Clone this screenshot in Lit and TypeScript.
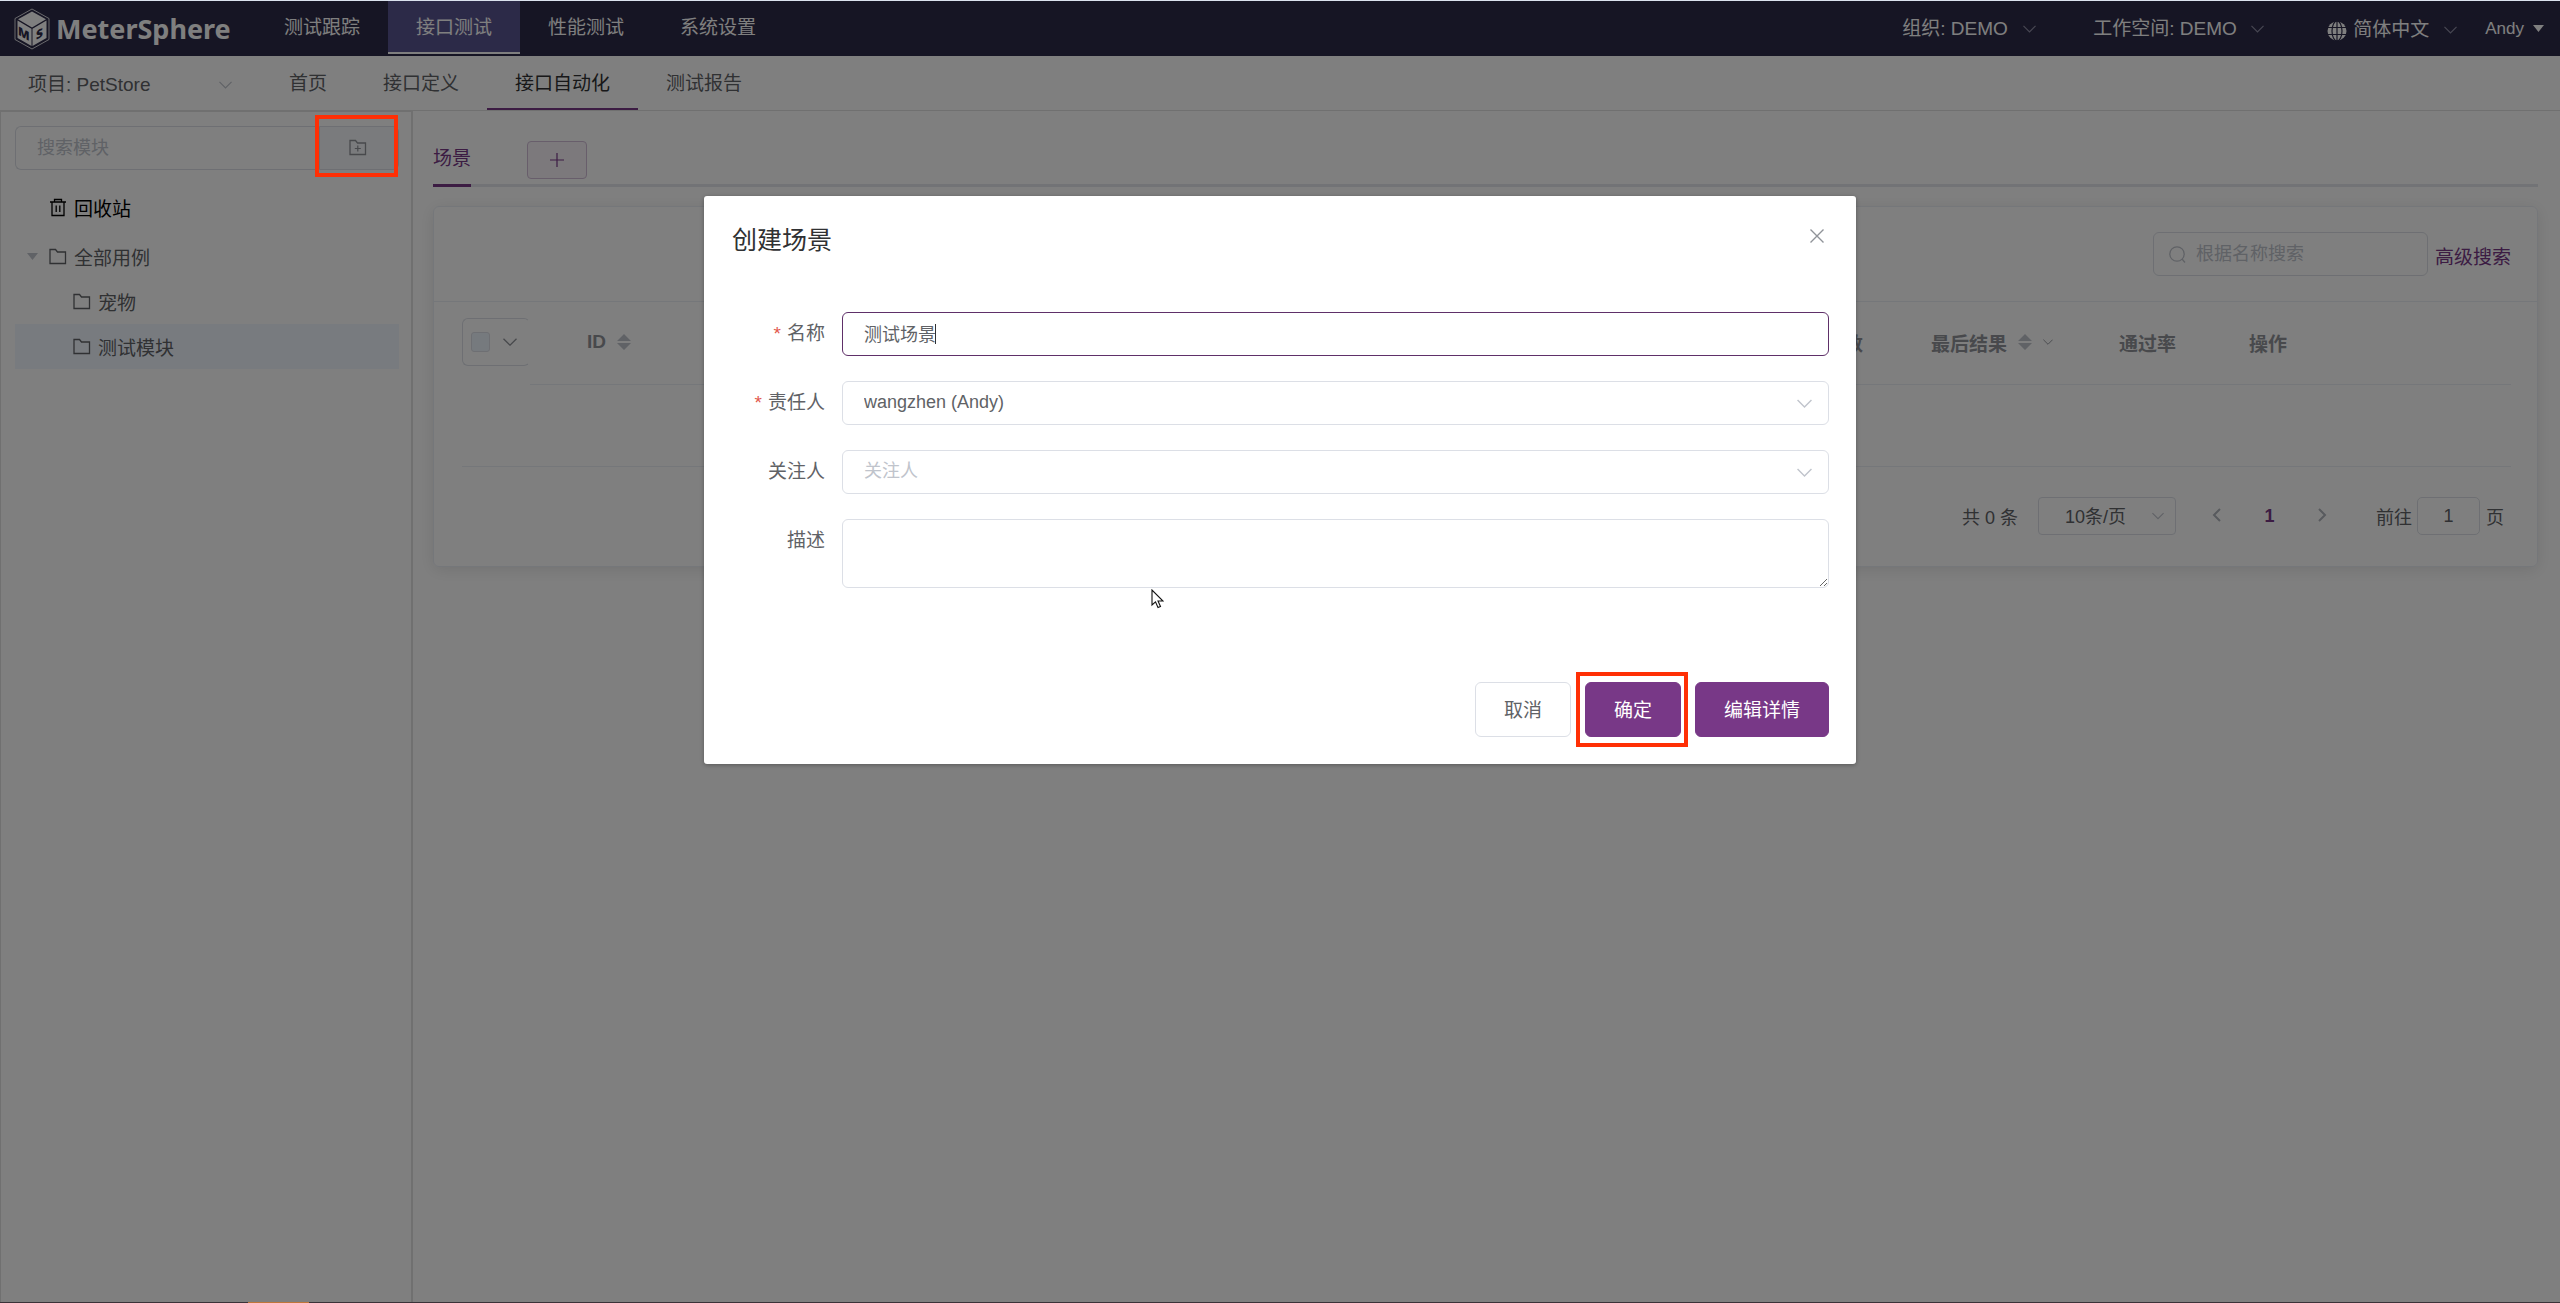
import { LitElement, html, css, svg, nothing } from "lit";
import { customElement, property } from "lit/decorators.js";
import { classMap } from "lit/directives/class-map.js";

const chevron = (cls: string) => html`
  <svg class="chev ${cls}" viewBox="0 0 14 8" aria-hidden="true">
    <path d="M0.5 0.7 7 7.2 13.5 0.7" fill="none" stroke="currentColor" stroke-width="1.3" />
  </svg>
`;

const folderPath = svg`<path d="M1 1.5H6.5L8.5 4H16.5V15.5H1Z" fill="none" stroke="currentColor" stroke-width="1.3" />`;

const folder = html`
  <svg class="folder" viewBox="0 0 18 17" aria-hidden="true">${folderPath}</svg>
`;

const sortIcon = html`
  <svg class="sort" viewBox="0 0 14 16" aria-hidden="true">
    <path d="M7 0 14 7H0ZM0 9H14L7 16Z" fill="#c0c4cc" />
  </svg>
`;

@customElement("ms-select")
export class MsSelect extends LitElement {
  @property() value = "";
  @property() label = "";
  @property() variant = "plain";

  static styles = css`
    :host {
      display: block;
    }
    .wrap {
      display: grid;
      align-items: center;
      height: 100%;
    }
    .field,
    .chev {
      grid-area: 1 / 1;
    }
    .field {
      appearance: none;
      box-sizing: border-box;
      width: 100%;
      height: 100%;
      margin: 0;
      padding: 0 16px 0 0;
      border: 0;
      outline: 0;
      background: none;
      color: inherit;
      font: inherit;
    }
    .field.page {
      padding: 2px 24px 0 26px;
      border: 1px solid #dcdfe6;
      border-radius: 4px;
    }
    .chev {
      justify-self: end;
      width: 13px;
      height: 8px;
      color: #c0c4cc;
      pointer-events: none;
    }
    .chev.dark {
      color: #8e8da4;
    }
    .chev.page {
      width: 12px;
      margin-right: 12px;
    }
  `;

  render() {
    return html`
      <div class="wrap">
        <select class="field ${this.variant}" aria-label=${this.label}>
          <option>${this.value}</option>
        </select>
        ${chevron(this.variant)}
      </div>
    `;
  }
}

@customElement("ms-header")
export class MsHeader extends LitElement {
  static styles = css`
    :host {
      display: block;
    }
    .bar {
      display: flex;
      height: 55px;
      background: #2c2a48;
      color: #fff;
      font-size: 19px;
    }
    .brand {
      display: flex;
      align-items: center;
      gap: 6px;
      box-sizing: border-box;
      width: 256px;
      padding-left: 14px;
      color: #fff;
      text-decoration: none;
    }
    .cube {
      width: 36px;
      height: 42px;
    }
    .mark {
      font: 800 12px "Open Sans", sans-serif;
    }
    .name {
      font: 700 27px/40px "Noto Sans", sans-serif;
    }
    .menu {
      display: flex;
      flex: 1;
      align-items: flex-start;
    }
    .item {
      height: 51px;
      padding: 0 28px;
      border-bottom: 2px solid transparent;
      color: #fff;
      line-height: 53px;
      text-decoration: none;
    }
    .item.active {
      border-bottom-color: #fff;
      background: #595591;
    }
    .tools {
      display: flex;
      align-items: center;
      padding-right: 16px;
    }
    .org {
      width: 134px;
      margin-right: 57px;
    }
    .space {
      width: 171px;
      margin-right: 63px;
    }
    .globe {
      width: 20px;
      height: 20px;
      margin: 5px 6px 0 0;
    }
    .lang {
      width: 104px;
      margin: 2px 28px 0 0;
    }
    .user {
      display: flex;
      align-items: center;
      gap: 9px;
      padding: 0;
      border: 0;
      background: none;
      color: #fff;
      font: 17px/24px "Liberation Sans", sans-serif;
    }
    .caret {
      width: 11px;
      height: 7px;
    }
  `;

  render() {
    const items = ["测试跟踪", "接口测试", "性能测试", "系统设置"];
    return html`
      <header class="bar">
        <a class="brand" href="#">
          <svg class="cube" viewBox="0 0 36 42" aria-hidden="true">
            <path d="M18 1 35 10.500V31.500L18 41 1 31.500V10.500Z" fill="none" stroke="#fff" stroke-width="1" opacity="0.8" />
            <path d="M18 3.500 32 11.300 18 19.500 4 11.300Z" fill="#fff" />
            <path d="M3.500 12.500 17.500 20.700V38L3.500 30Z" fill="#fff" />
            <path d="M32.500 12.500 18.500 20.700V38L32.500 30Z" fill="#fff" />
            <text class="mark" fill="#2c2a48" transform="translate(4 26.500) skewY(30)">M</text>
            <text class="mark" fill="#2c2a48" transform="translate(22 32) skewY(-30)">S</text>
          </svg>
          <span class="name">MeterSphere</span>
        </a>
        <nav class="menu">
          ${items.map(
            (label, i) => html`<a href="#" class=${classMap({ item: true, active: i === 1 })}>${label}</a>`,
          )}
        </nav>
        <div class="tools">
          <ms-select class="org" variant="dark" label="组织" value="组织: DEMO"></ms-select>
          <ms-select class="space" variant="dark" label="工作空间" value="工作空间: DEMO"></ms-select>
          <svg class="globe" viewBox="0 0 20 20" aria-hidden="true">
            <circle cx="10" cy="10" r="9.500" fill="#fff" />
            <g fill="none" stroke="#2c2a48" stroke-width="1.200">
              <ellipse cx="10" cy="10" rx="5" ry="10" />
              <path d="M10 0V20M0 6.500H20M0 13.500H20" />
            </g>
          </svg>
          <ms-select class="lang" variant="dark" label="语言" value="简体中文"></ms-select>
          <button class="user">
            Andy
            <svg class="caret" viewBox="0 0 11 7" aria-hidden="true"><path d="M0 0H11L5.500 7Z" fill="#fff" /></svg>
          </button>
        </div>
      </header>
    `;
  }
}

@customElement("ms-subnav")
export class MsSubnav extends LitElement {
  static styles = css`
    :host {
      display: block;
    }
    .bar {
      display: flex;
      height: 54px;
      border-bottom: 1px solid #e0e0e0;
      color: #606266;
      font-size: 19px;
    }
    .project {
      width: 204px;
      margin: 3px 29px 0 28px;
    }
    .item {
      height: 52px;
      padding: 0 28px;
      border-bottom: 2px solid transparent;
      color: #606266;
      line-height: 55px;
      text-decoration: none;
    }
    .item.active {
      border-bottom-color: #783887;
      color: #303133;
    }
  `;

  render() {
    const items = ["首页", "接口定义", "接口自动化", "测试报告"];
    return html`
      <nav class="bar">
        <ms-select class="project" label="项目" value="项目: PetStore"></ms-select>
        ${items.map(
          (label, i) => html`<a href="#" class=${classMap({ item: true, active: i === 2 })}>${label}</a>`,
        )}
      </nav>
    `;
  }
}

@customElement("ms-sidebar")
export class MsSidebar extends LitElement {
  static styles = css`
    :host {
      display: block;
    }
    .side {
      box-sizing: border-box;
      height: 100%;
      padding: 14px 12px 0 14px;
      border: solid #e0e0e0;
      border-width: 1px 2px 0 1px;
      color: #606266;
      font-size: 19px;
    }
    .search {
      display: flex;
      height: 44px;
      margin-bottom: 15px;
    }
    .box {
      box-sizing: border-box;
      flex: 1;
      min-width: 0;
      padding: 0 21px;
      border: 1px solid #dcdfe6;
      border-right: 0;
      border-radius: 6px 0 0 6px;
      outline: 0;
      background: none;
      font: inherit;
      font-size: 18px;
    }
    .box::placeholder {
      color: #c0c4cc;
    }
    .append {
      position: relative;
      display: flex;
      width: 80px;
    }
    .add {
      display: flex;
      flex: 1;
      align-items: center;
      justify-content: center;
      padding: 0 2px 2px 0;
      border: 1px solid #dcdfe6;
      border-radius: 0 6px 6px 0;
      background: #f5f7fa;
      color: #909399;
    }
    .marker {
      position: absolute;
      z-index: 20;
      inset: -11px 1px -7px -4px;
      border: 4px solid #ff2f05;
      pointer-events: none;
    }
    .folder,
    .trash {
      width: 18px;
      height: 17px;
      flex: none;
    }
    .trash {
      height: 19px;
    }
    .row {
      display: flex;
      align-items: center;
      gap: 7px;
      width: 100%;
      height: 45px;
      padding: 0 0 0 34px;
      border: 0;
      background: none;
      color: #606266;
      font: inherit;
      text-align: left;
    }
    .row.bin {
      margin-bottom: 4px;
      color: #000;
    }
    .row.root {
      padding-left: 12px;
    }
    .row.leaf {
      padding-left: 58px;
    }
    .row.current {
      background: #f0f7ff;
    }
    .tri {
      width: 11px;
      height: 7px;
      margin-right: 4px;
    }
  `;

  render() {
    return html`
      <aside class="side">
        <div class="search">
          <input class="box" type="text" placeholder="搜索模块" aria-label="搜索模块" />
          <div class="append">
            <button class="add" aria-label="添加模块">
              <svg class="folder" viewBox="0 0 18 17" aria-hidden="true">
                ${folderPath}
                <path d="M8.800 6.500V12.500M5.800 9.500H11.800" stroke="currentColor" stroke-width="1.200" />
              </svg>
            </button>
            <span class="marker"></span>
          </div>
        </div>
        <button class="row bin">
          <svg class="trash" viewBox="0 0 18 19" aria-hidden="true">
            <path
              d="M1 4H17M5.500 4V1.500H12.500V4M3 4V17.500H15V4M7.200 7.500V14M10.800 7.500V14"
              fill="none"
              stroke="currentColor"
              stroke-width="1.300"
            />
          </svg>
          回收站
        </button>
        <button class="row root">
          <svg class="tri" viewBox="0 0 11 7" aria-hidden="true"><path d="M0 0H11L5.500 7Z" fill="#c0c4cc" /></svg>
          ${folder} 全部用例
        </button>
        <button class="row leaf">${folder} 宠物</button>
        <button class="row leaf current">${folder} 测试模块</button>
      </aside>
    `;
  }
}

@customElement("ms-scenarios")
export class MsScenarios extends LitElement {
  static styles = css`
    :host {
      display: block;
    }
    .main {
      padding: 20px 22px 40px 20px;
      color: #606266;
      font-size: 19px;
    }
    .tabs {
      display: flex;
      align-items: flex-end;
      gap: 56px;
      height: 56px;
      margin-bottom: 19px;
      box-shadow: inset 0 -3px #e4e7ed;
    }
    .tab {
      box-sizing: content-box;
      height: 53px;
      padding: 0;
      border: 0;
      border-bottom: 3px solid #783887;
      background: none;
      color: #783887;
      font: inherit;
      line-height: 56px;
    }
    .plus {
      display: flex;
      align-items: center;
      justify-content: center;
      width: 60px;
      height: 38px;
      margin-bottom: 8px;
      padding: 0;
      border: 1px solid #d0bcd6;
      border-radius: 4px;
      background: #f8f3f9;
      color: #783887;
    }
    .plus-icon {
      width: 14px;
      height: 14px;
    }
    .card {
      border: 1px solid #ebeef5;
      border-radius: 6px;
      box-shadow: 0 3px 16px rgba(0, 0, 0, 0.1);
    }
    .head {
      display: flex;
      align-items: center;
      justify-content: flex-end;
      gap: 7px;
      padding: 25px 26px;
      border-bottom: 1px solid #ebeef5;
    }
    .search {
      display: flex;
      align-items: center;
      gap: 10px;
      box-sizing: border-box;
      width: 275px;
      height: 44px;
      padding: 0 15px;
      border: 1px solid #dcdfe6;
      border-radius: 6px;
    }
    .lens {
      width: 17px;
      height: 17px;
      flex: none;
      color: #c0c4cc;
    }
    .query {
      flex: 1;
      min-width: 0;
      padding: 0;
      border: 0;
      outline: 0;
      background: none;
      font: inherit;
      font-size: 18px;
    }
    .query::placeholder {
      color: #c0c4cc;
    }
    .advanced {
      padding-top: 2px;
      color: #783887;
      text-decoration: none;
    }
    .body {
      padding: 0 26px 31px 28px;
    }
    .table {
      width: 100%;
      border-collapse: separate;
      border-spacing: 0;
      table-layout: fixed;
    }
    .th {
      height: 80px;
      padding: 0 0 2px 14px;
      border-bottom: 1px solid #ebeef5;
      color: #909399;
      font-weight: 700;
      text-align: left;
      white-space: nowrap;
    }
    .th.pick {
      width: 68px;
      padding: 0 0 2px;
      border-bottom-color: transparent;
    }
    .th.id {
      width: 112px;
      padding-left: 57px;
    }
    .th.steps {
      width: 111px;
    }
    .th.result {
      width: 174px;
    }
    .th.rate {
      width: 116px;
    }
    .th.ops {
      width: 262px;
    }
    .empty {
      height: 81px;
      padding: 0;
      border-bottom: 1px solid #ebeef5;
    }
    .label {
      display: flex;
      align-items: center;
      gap: 11px;
    }
    .sort {
      width: 14px;
      height: 16px;
    }
    .chev {
      width: 14px;
      height: 8px;
    }
    .chev.small {
      width: 10px;
      height: 6px;
    }
    .picker {
      display: flex;
      align-items: center;
      gap: 13px;
      box-sizing: border-box;
      height: 48px;
      padding-left: 8px;
      border: 1px solid #dcdfe6;
      border-right-color: transparent;
      border-radius: 6px;
    }
    .check {
      appearance: none;
      box-sizing: border-box;
      width: 19px;
      height: 20px;
      margin: 0;
      border: 1px solid #dcdfe6;
      border-radius: 3px;
      background: #edf5fc;
    }
    .pager {
      display: flex;
      align-items: center;
      justify-content: flex-end;
      height: 38px;
      margin-top: 30px;
      padding-right: 7px;
      font-size: 18px;
    }
    .size {
      width: 138px;
      height: 38px;
      margin: 0 14px 0 20px;
    }
    .step {
      width: 53px;
      height: 38px;
      padding: 0;
      border: 0;
      background: none;
      color: #783887;
      font: inherit;
      font-weight: 700;
    }
    .arrow {
      width: 9px;
      height: 14px;
      color: #b0b4bc;
    }
    .goto {
      margin-left: 27px;
    }
    .jump {
      box-sizing: border-box;
      width: 63px;
      height: 38px;
      margin: 0 6px 0 5px;
      padding: 0;
      border: 1px solid #dcdfe6;
      border-radius: 5px;
      outline: 0;
      background: none;
      color: #606266;
      font: inherit;
      text-align: center;
    }
  `;

  render() {
    return html`
      <main class="main">
        <div class="tabs" role="tablist">
          <button class="tab" role="tab" aria-selected="true">场景</button>
          <button class="plus" aria-label="新增">
            <svg class="plus-icon" viewBox="0 0 14 14" aria-hidden="true">
              <path d="M7 0V14M0 7H14" stroke="currentColor" stroke-width="1.200" />
            </svg>
          </button>
        </div>
        <section class="card">
          <div class="head">
            <div class="search">
              <svg class="lens" viewBox="0 0 17 17" aria-hidden="true">
                <circle cx="8" cy="8" r="7.200" fill="none" stroke="currentColor" stroke-width="1.300" />
                <path d="M13 13 16 16.500" stroke="currentColor" stroke-width="1.300" />
              </svg>
              <input class="query" type="text" placeholder="根据名称搜索" aria-label="根据名称搜索" />
            </div>
            <a class="advanced" href="#">高级搜索</a>
          </div>
          <div class="body">
            <table class="table">
              <thead>
                <tr>
                  <th class="th pick">
                    <div class="picker">
                      <input class="check" type="checkbox" aria-label="全选" />
                      ${chevron("")}
                    </div>
                  </th>
                  <th class="th id"><span class="label">ID ${sortIcon}</span></th>
                  <th class="th"></th>
                  <th class="th steps">步骤数</th>
                  <th class="th result">
                    <span class="label">最后结果 ${sortIcon} ${chevron("small")}</span>
                  </th>
                  <th class="th rate">通过率</th>
                  <th class="th ops">操作</th>
                </tr>
              </thead>
              <tbody>
                <tr>
                  <td class="empty" colspan="7"></td>
                </tr>
              </tbody>
            </table>
            <div class="pager">
              <span>共 0 条</span>
              <ms-select class="size" variant="page" label="每页条数" value="10条/页"></ms-select>
              <button class="step" aria-label="上一页">
                <svg class="arrow" viewBox="0 0 9 14" aria-hidden="true">
                  <path d="M8 1 2 7 8 13" fill="none" stroke="currentColor" stroke-width="2" />
                </svg>
              </button>
              <button class="step">1</button>
              <button class="step" aria-label="下一页">
                <svg class="arrow" viewBox="0 0 9 14" aria-hidden="true">
                  <path d="M1 1 7 7 1 13" fill="none" stroke="currentColor" stroke-width="2" />
                </svg>
              </button>
              <label class="goto" for="page">前往</label>
              <input class="jump" id="page" type="text" .value=${"1"} />
              <span>页</span>
            </div>
          </div>
        </section>
      </main>
    `;
  }
}

@customElement("ms-dialog")
export class MsDialog extends LitElement {
  static styles = css`
    :host {
      display: block;
    }
    .dialog {
      padding: 28px 27px 27px 28px;
      border-radius: 3px;
      background: #fff;
      box-shadow: 0 1px 4px rgba(0, 0, 0, 0.3);
      color: #606266;
      font-size: 19px;
    }
    .head {
      display: flex;
      align-items: flex-start;
      justify-content: space-between;
      height: 33px;
      margin-bottom: 55px;
    }
    .title {
      margin: 0;
      color: #303133;
      font-size: 25px;
      font-weight: 400;
      line-height: 33px;
    }
    .close {
      display: flex;
      padding: 5px;
      border: 0;
      background: none;
      color: #909399;
    }
    .x {
      width: 14px;
      height: 14px;
    }
    .form {
      display: grid;
      grid-template-columns: 93px 1fr;
      gap: 25px 17px;
    }
    .label {
      color: #606266;
      line-height: 44px;
      text-align: right;
    }
    .star {
      margin-right: 6px;
      color: #e2574c;
    }
    .field {
      position: relative;
      display: grid;
      align-items: center;
    }
    .control {
      grid-area: 1 / 1;
      appearance: none;
      box-sizing: border-box;
      width: 100%;
      height: 44px;
      margin: 0;
      padding: 0 21px 2px;
      border: 1px solid #dcdfe6;
      border-radius: 6px;
      outline: 0;
      background: #fff;
      color: #606266;
      font: inherit;
      font-size: 18px;
    }
    .control.focused {
      border-color: #5f3069;
    }
    .control.blank {
      color: #c0c4cc;
    }
    .control.area {
      height: 69px;
      resize: vertical;
    }
    .caret {
      position: absolute;
      left: 93px;
      width: 1px;
      height: 20px;
      background: #303133;
    }
    .chev {
      grid-area: 1 / 1;
      justify-self: end;
      width: 15px;
      height: 9px;
      margin-right: 17px;
      color: #c0c4cc;
      pointer-events: none;
    }
    .foot {
      display: flex;
      justify-content: flex-end;
      gap: 14px;
      margin-top: 94px;
    }
    .spot {
      position: relative;
      display: flex;
    }
    .marker {
      position: absolute;
      inset: -10px -7px -10px -9px;
      border: 4px solid #ff2f05;
      pointer-events: none;
    }
    .btn {
      height: 55px;
      padding: 0 28px 2px;
      border: 1px solid #dcdfe6;
      border-radius: 6px;
      background: #fff;
      color: #606266;
      font: inherit;
    }
    .btn.primary {
      border-color: #783887;
      background: #783887;
      color: #fff;
    }
  `;

  render() {
    const label = (id: string, text: string, required = false) => html`
      <label class="label" for=${id}>${required ? html`<span class="star">*</span>` : nothing}${text}</label>
    `;
    return html`
      <section class="dialog" role="dialog" aria-labelledby="title">
        <div class="head">
          <h2 class="title" id="title">创建场景</h2>
          <button class="close" aria-label="关闭">
            <svg class="x" viewBox="0 0 14 14" aria-hidden="true">
              <path d="M0.500 0.500 13.500 13.500M13.500 0.500 0.500 13.500" stroke="currentColor" stroke-width="1.400" />
            </svg>
          </button>
        </div>
        <form class="form">
          ${label("name", "名称", true)}
          <div class="field">
            <input class="control focused" id="name" type="text" .value=${"测试场景"} />
            <span class="caret"></span>
          </div>
          ${label("owner", "责任人", true)}
          <div class="field">
            <select class="control" id="owner">
              <option>wangzhen (Andy)</option>
            </select>
            ${chevron("")}
          </div>
          ${label("follower", "关注人")}
          <div class="field">
            <select class="control blank" id="follower">
              <option>关注人</option>
            </select>
            ${chevron("")}
          </div>
          ${label("desc", "描述")}
          <div class="field"><textarea class="control area" id="desc"></textarea></div>
        </form>
        <div class="foot">
          <button class="btn">取消</button>
          <div class="spot">
            <button class="btn primary">确定</button>
            <span class="marker"></span>
          </div>
          <button class="btn primary">编辑详情</button>
        </div>
      </section>
    `;
  }
}

@customElement("app-root")
export class AppRoot extends LitElement {
  static styles = css`
    :host {
      display: block;
      font-family: "Liberation Sans", "Noto Sans CJK SC", sans-serif;
    }
    .frame {
      position: relative;
      display: flex;
      flex-direction: column;
      box-sizing: border-box;
      min-height: 100vh;
      border-top: 1px solid #dbe2ee;
      border-bottom: 1px solid #3a3238;
      background: #fff;
    }
    .columns {
      display: flex;
      flex: 1;
    }
    .left {
      width: 413px;
      flex: none;
    }
    .right {
      flex: 1;
      min-width: 0;
    }
    .mask {
      position: absolute;
      z-index: 10;
      inset: 0;
      background: rgba(0, 0, 0, 0.5);
    }
    .dialog {
      width: 45%;
      margin: 195px auto 0;
    }
    .taskbar {
      position: absolute;
      z-index: 20;
      left: 248px;
      bottom: -1px;
      width: 61px;
      height: 1px;
      background: #c0763a;
    }
    .pointer {
      position: absolute;
      z-index: 30;
      left: 1151px;
      top: 588px;
      width: 13px;
      height: 20px;
    }
  `;

  render() {
    return html`
      <div class="frame">
        <ms-header></ms-header>
        <ms-subnav></ms-subnav>
        <div class="columns">
          <ms-sidebar class="left"></ms-sidebar>
          <ms-scenarios class="right"></ms-scenarios>
        </div>
        <div class="mask"><ms-dialog class="dialog"></ms-dialog></div>
        <span class="taskbar"></span>
        <svg class="pointer" viewBox="0 0 13 20" aria-hidden="true">
          <path d="M1 1V16L4.500 12.800 7 18.500 9.500 17.500 7 12H12Z" fill="#fff" stroke="#111" stroke-width="1.100" />
        </svg>
      </div>
    `;
  }
}
